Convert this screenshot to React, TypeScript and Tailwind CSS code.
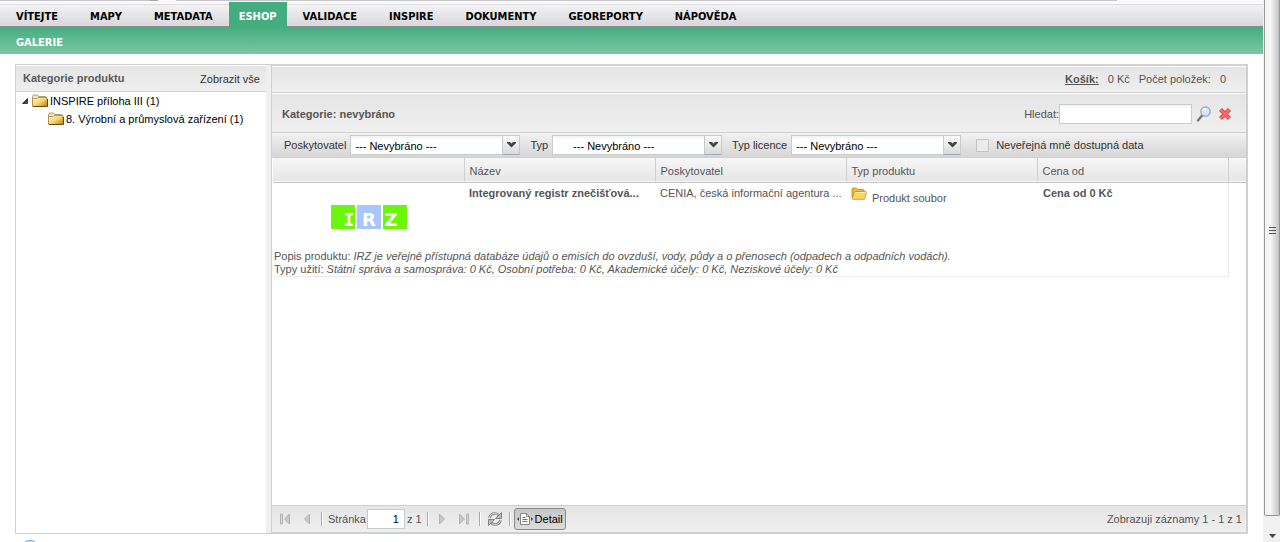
import React from "react";
import { clsx } from "clsx";

const menu = ["VÍTEJTE", "MAPY", "METADATA", "ESHOP", "VALIDACE", "INSPIRE", "DOKUMENTY", "GEOREPORTY", "NÁPOVĚDA"];

const FolderIcon = () => (
  <svg width="16" height="16" viewBox="0 0 16 16" className="shrink-0">
    <defs>
      <linearGradient id="folder" x1="0" y1="0" x2="1" y2="1">
        <stop offset="0" stopColor="#fffbd8" />
        <stop offset="0.5" stopColor="#f8d673" />
        <stop offset="1" stopColor="#c07c08" />
      </linearGradient>
    </defs>
    <path d="M.5 13V3.500l1-1.500h4l1 1.500H13.500v3" fill="#efe6b4" stroke="#a9a070" />
    <path d="M.5 13.500V5.500H5l1-1h9v9z" fill="url(#folder)" stroke="#a8873c" strokeWidth="0.8" />
    <path d="M1 13.500h14.500V6" fill="none" stroke="#6b4c10" />
  </svg>
);

const YellowFolderIcon = () => (
  <svg width="16" height="16" viewBox="0 0 16 16" className="shrink-0">
    <path d="M1 11.500V3q0-1 1-1h3.500l1.500 1.500H12q1 0 1 1v7z" fill="#e9b93a" stroke="#c08a1c" strokeWidth="0.8" />
    <path d="M1.200 12.500l2-6q.3-1 1.300-1H14.500q1 0 .8 1L14 12.500q-.2.800-1 .800H1.500z" fill="#fbd65c" stroke="#c58f1e" strokeWidth="0.8" />
    <path d="M4.500 6.500h10" stroke="#fff0ae" />
  </svg>
);

const SearchIcon = () => (
  <svg width="16" height="16" viewBox="0 0 16 16">
    <path d="M6 9.500L2 14.500" stroke="#7d7468" strokeWidth="2.200" strokeLinecap="round" />
    <circle cx="9.500" cy="5.500" r="4.700" fill="#d3e6fa" stroke="#98a3b2" strokeWidth="1.200" />
    <path d="M6.800 5q.7-2.300 3-2.300" fill="none" stroke="#fff" strokeWidth="1.400" />
  </svg>
);

const DeleteIcon = () => (
  <svg width="16" height="16" viewBox="0 0 16 16">
    <path d="M3.500 3.500l9 9M12.500 3.500l-9 9" stroke="#e04444" strokeWidth="4.200" />
    <path d="M3.500 3.500l9 9M12.500 3.500l-9 9" stroke="#fb6a66" strokeWidth="2.400" />
  </svg>
);

const RefreshIcon = () => (
  <svg width="16" height="16" viewBox="0 0 16 16" fill="none">
    <path d="M2.500 7q.8-4.500 5.500-4.500 2.500 0 4 2" stroke="#808080" strokeWidth="2.600" />
    <path d="M2.500 7q.8-4.500 5.500-4.500 2.500 0 4 2" stroke="#ddd" />
    <path d="M14.500 1.500v6h-6z" fill="#bbb" stroke="#707070" strokeWidth="0.8" />
    <path d="M13.500 9q-.8 4.500-5.500 4.500-2.500 0-4-2" stroke="#808080" strokeWidth="2.600" />
    <path d="M13.500 9q-.8 4.500-5.500 4.500-2.500 0-4-2" stroke="#ddd" />
    <path d="M1.500 14.500v-6h6z" fill="#bbb" stroke="#707070" strokeWidth="0.8" />
  </svg>
);

const DetailIcon = () => (
  <svg width="16" height="16" viewBox="0 0 16 16">
    <path d="M3.500 2.500h6l3 3v8h-9z" fill="#fafafa" stroke="#888" />
    <path d="M9.500 2.500v3h3" fill="none" stroke="#888" />
    <path d="M5.500 6.500h3M5.500 8.500h5M5.500 10.500h5" stroke="#777" />
    <path d="M2 6v4L0 8zM14 6v4l2-2z" fill="#444" />
  </svg>
);

const PageIcon = ({ back, bar }: { back?: boolean; bar?: boolean }) => (
  <svg width="16" height="16" viewBox="0 0 16 16" className={clsx(back && "-scale-x-100")}>
    <path d={bar ? "M3.500 3v10l5-5z" : "M5.500 3v10l5-5z"} fill="#c8c8c8" stroke="#aaa" strokeWidth="0.8" />
    {bar && <path d="M10.500 3h2v10h-2z" fill="#d4d4d4" stroke="#aaa" strokeWidth="0.8" />}
  </svg>
);

const Separator = () => <span className="h-[14px] w-[2px] border-r border-white bg-[#a9a9a9]" />;

type ComboProps = { id: string; label: string; indent?: boolean };

const Combo = ({ id, label, indent }: ComboProps) => (
  <div className="flex items-center gap-[4px]">
    <label htmlFor={id}>{label}</label>
    <div className="relative h-[20px] w-[170px]">
      <select
        id={id}
        className={clsx(
          "h-full w-full appearance-none border border-[#c5cccc] bg-white bg-linear-to-b from-[#eef2f2] to-white to-20% pt-[2px] pr-[18px] text-black",
          indent ? "pl-[20px]" : "pl-[4px]"
        )}
      >
        <option>--- Nevybráno ---</option>
      </select>
      <span className="pointer-events-none absolute inset-y-0 right-0 flex w-[18px] items-center justify-center border border-[#c5cccc] border-b-[#a5aab8] bg-linear-to-b from-[#fafafa] to-[#dadada]">
        <svg width="9" height="6" viewBox="0 0 9 6">
          <path d="M0 0h3l1.500 1.500L6 0h3v1L4.500 5.500 0 1z" fill="#444" />
        </svg>
      </span>
    </div>
  </div>
);

const NavBar = () => (
  <header className="font-['DejaVu_Sans_Condensed','DejaVu_Sans',sans-serif] text-[11px] font-bold">
    <div className="flex h-[5px] items-start border-b border-[#dcdce0] bg-[#fafafb]">
      <span className="h-[1px] w-[150px] bg-[#c6c6ca]" />
      <span className="h-[1px] w-[8px] bg-[#aaa]" />
      <span className="ml-[18px] h-[1px] flex-1 bg-[#c6c6ca]" />
      <span className="h-[1px] w-[146px]" />
    </div>
    <nav className="flex h-[22px] border-b border-[#8c8c90] bg-linear-to-b from-[#f3f3f5] to-[#d8d8dc]">
      {menu.map((item) => (
        <a
          key={item}
          href="#"
          className={clsx(
            "flex items-center",
            item === "ESHOP" ? "-mt-[3px] h-[25px] bg-[#44ad7f] px-[10px] pt-[5px] text-white" : "h-[22px] px-[16px] pt-[2px] text-black"
          )}
        >
          {item}
        </a>
      ))}
    </nav>
    <div className="flex h-[27px] items-center bg-linear-to-b from-[#44ad7f] to-[#78c8a4] pt-[4px] pl-[16px] text-white">
      <a href="#">GALERIE</a>
    </div>
  </header>
);

const CategoryPanel = () => (
  <aside className="w-[250px] shrink-0 bg-white text-black">
    <div className="flex h-[27px] items-center justify-between border-t border-b border-t-white border-b-[#d0d0d0] bg-linear-to-b from-[#e5e5e5] to-[#efefef] pr-[6px] pl-[7px]">
      <h2 className="pb-[2px] font-bold text-[#5a5a5a]">Kategorie produktu</h2>
      <button type="button" className="text-[#333]">Zobrazit vše</button>
    </div>
    <ul>
      <li className="flex h-[18px] items-center pl-[5px]">
        <svg width="8" height="8" viewBox="0 0 8 8" className="mr-[3px]">
          <path d="M6.500 1.500v5h-5z" fill="#444" stroke="#222" strokeWidth="0.8" />
        </svg>
        <FolderIcon />
        <span className="pl-[2px]">INSPIRE příloha III (1)</span>
      </li>
      <li className="flex h-[18px] items-center pl-[32px]">
        <FolderIcon />
        <span className="pl-[2px]">8. Výrobní a průmyslová zařízení (1)</span>
      </li>
    </ul>
  </aside>
);

const IrzLogo = () => (
  <svg width="78" height="28" viewBox="0 0 78 28" className="mx-auto" fill="#fff" fontFamily="DejaVu Sans" fontWeight="bold" fontSize="18">
    <rect x="1" y="1" width="24" height="24" fill="#6cf60c" />
    <rect x="27" y="1" width="24" height="24" fill="#a9c6fb" />
    <rect x="53" y="1" width="24" height="24" fill="#6cf60c" />
    <text x="19" y="22" textAnchor="middle" fontFamily="DejaVu Sans Mono">I</text>
    <text x="39" y="22" textAnchor="middle">R</text>
    <text x="61" y="22" textAnchor="middle">Z</text>
  </svg>
);

const ProductGrid = () => (
  <table className="w-full table-fixed border-collapse text-left">
    <colgroup>
      <col />
      <col />
      <col />
      <col />
      <col />
      <col className="w-[18px]" />
    </colgroup>
    <thead>
      <tr className="h-[24px] border-b border-[#c5c5c5] bg-linear-to-b from-[#f7f7f7] to-[#e6e6e6]">
        {["", "Název", "Poskytovatel", "Typ produktu", "Cena od"].map((title, i) => (
          <th key={i} className="border-r border-[#d0d0d0] px-[5px] pt-[2px] font-normal">{title}</th>
        ))}
        <th />
      </tr>
    </thead>
    <tbody>
      <tr className="h-[68px] align-top">
        <td className="pt-[21px]"><IrzLogo /></td>
        <td className="pt-[3px] pl-[5px] font-bold whitespace-nowrap">Integrovaný registr znečišťová...</td>
        <td className="pt-[3px] pl-[5px] whitespace-nowrap">CENIA, česká informační agentura ...</td>
        <td className="px-[5px] pt-[3px]">
          <div className="flex gap-[5px]">
            <YellowFolderIcon />
            <span className="pt-[5px]">Produkt soubor</span>
          </div>
        </td>
        <td className="border-r border-[#ededed] px-[6px] pt-[3px] font-bold">Cena od 0 Kč</td>
        <td />
      </tr>
      <tr>
        <td colSpan={5} className="border-r border-b border-[#ededed] pl-[1px] leading-[13px]">
          <p>Popis produktu: <i>IRZ je veřejně přístupná databáze údajů o emisích do ovzduší, vody, půdy a o přenosech (odpadech a odpadních vodách).</i></p>
          <p>Typy užití: <i>Státní správa a samospráva: 0 Kč, Osobní potřeba: 0 Kč, Akademické účely: 0 Kč, Neziskové účely: 0 Kč</i></p>
        </td>
        <td />
      </tr>
    </tbody>
  </table>
);

const PagingBar = () => (
  <footer className="flex h-[27px] items-center border-t border-[#d0d0d0] bg-linear-to-b from-[#e5e5e5] to-[#efefef] pr-[4px] pl-[5px]">
    <button type="button" aria-label="První"><PageIcon back bar /></button>
    <button type="button" aria-label="Předchozí" className="mr-[6px] ml-[6px]"><PageIcon back /></button>
    <Separator />
    <label htmlFor="page" className="pr-[1px] pl-[5px]">Stránka</label>
    <input id="page" defaultValue="1" className="h-[20px] w-[38px] border border-[#c5cccc] bg-white pr-[5px] text-right text-black" />
    <span className="pr-[5px] pl-[2px]">z 1</span>
    <Separator />
    <button type="button" aria-label="Další" className="mr-[6px] ml-[5px]"><PageIcon /></button>
    <button type="button" aria-label="Poslední" className="mr-[7px]"><PageIcon bar /></button>
    <Separator />
    <button type="button" aria-label="Obnovit" className="mr-[6px] ml-[6px]"><RefreshIcon /></button>
    <Separator />
    <button type="button" className="ml-[3px] flex h-[22px] items-center gap-[2px] rounded-[3px] border border-[#8a8a8a] bg-linear-to-b from-[#c6c6c6] to-[#dcdcdc] px-[2px] text-black">
      <DetailIcon />
      Detail
    </button>
    <span className="ml-auto">Zobrazuji záznamy 1 - 1 z 1</span>
  </footer>
);

const ShopPanel = () => (
  <section className="flex min-w-0 flex-1 flex-col border border-[#d0d0d0] bg-white">
    <div className="flex h-[27px] items-center justify-end gap-[9px] border-t border-b border-t-white border-b-[#d0d0d0] bg-linear-to-b from-[#e5e5e5] to-[#efefef] pr-[20px] pb-[1px]">
      <a href="#" className="font-bold underline">Košík:</a>
      <span>0 Kč</span>
      <span>Počet položek:</span>
      <span>0</span>
    </div>
    <div className="flex h-[40px] items-center border-t border-b border-t-white border-b-[#d0d0d0] bg-linear-to-b from-[#e5e5e5] to-[#efefef] pt-[2px] pr-[13px] pl-[10px]">
      <h1 className="font-bold">Kategorie: nevybráno</h1>
      <label htmlFor="search" className="ml-auto">Hledat:</label>
      <input id="search" className="h-[20px] w-[133px] border border-[#c5cccc] bg-white bg-linear-to-b from-[#eef2f2] to-white to-20% px-[4px]" />
      <button type="button" aria-label="Hledat" className="ml-[4px]"><SearchIcon /></button>
      <button type="button" aria-label="Zrušit" className="ml-[5px]"><DeleteIcon /></button>
    </div>
    <form className="flex h-[25px] items-center border-b border-[#d0d0d0] bg-linear-to-b from-[#f2f2f2] to-[#d6d6d6] pl-[12px] text-[#333]">
      <div className="flex gap-[10px]">
        <Combo id="provider" label="Poskytovatel" />
        <Combo id="type" label="Typ" indent />
        <Combo id="licence" label="Typ licence" />
      </div>
      <input id="private" type="checkbox" className="mr-[7px] ml-[15px] size-[13px] appearance-none border border-[#c5c5c5] bg-[#ebebeb]" />
      <label htmlFor="private">Neveřejná mně dostupná data</label>
    </form>
    <div className="flex-1 pl-[1px]">
      <ProductGrid />
    </div>
    <PagingBar />
  </section>
);

const ScrollBar = () => (
  <div className="flex w-[17px] shrink-0 flex-col bg-[#f1f1f1] pl-[1px]">
    <div className="flex flex-1 flex-col items-center justify-center gap-[2px] rounded-b-[2px] border border-t-0 border-[#979797] bg-linear-to-r from-[#f5f5f5] from-40% to-[#c4c4c8] pb-[55px]">
      <span className="h-[1px] w-[7px] bg-[#555]" />
      <span className="h-[1px] w-[7px] bg-[#555]" />
      <span className="h-[1px] w-[7px] bg-[#555]" />
    </div>
    <div className="flex h-[26px] items-center justify-center pt-[14px]">
      <svg width="7" height="4" viewBox="0 0 7 4">
        <path d="M0 0h7L3.500 4z" fill="#444" />
      </svg>
    </div>
  </div>
);

const App = () => (
  <div className="flex h-screen overflow-hidden bg-white font-['Liberation_Sans',Arial,sans-serif] text-[11px] leading-[14px] text-[#555]">
    <div className="flex min-w-0 flex-1 flex-col">
      <NavBar />
      <main className="mx-[15px] mt-[10px] flex flex-1 border border-[#d0d0d0] bg-[#efefef]">
        <CategoryPanel />
        <div className="w-[5px] shrink-0" />
        <ShopPanel />
      </main>
      <div className="h-[8px] overflow-hidden pt-[6px] pl-[20px]">
        <svg width="20" height="20" viewBox="0 0 20 20">
          <circle cx="10" cy="10" r="9.500" fill="#dbe9f7" stroke="#6f9fd0" />
        </svg>
      </div>
    </div>
    <ScrollBar />
  </div>
);

export default App;
